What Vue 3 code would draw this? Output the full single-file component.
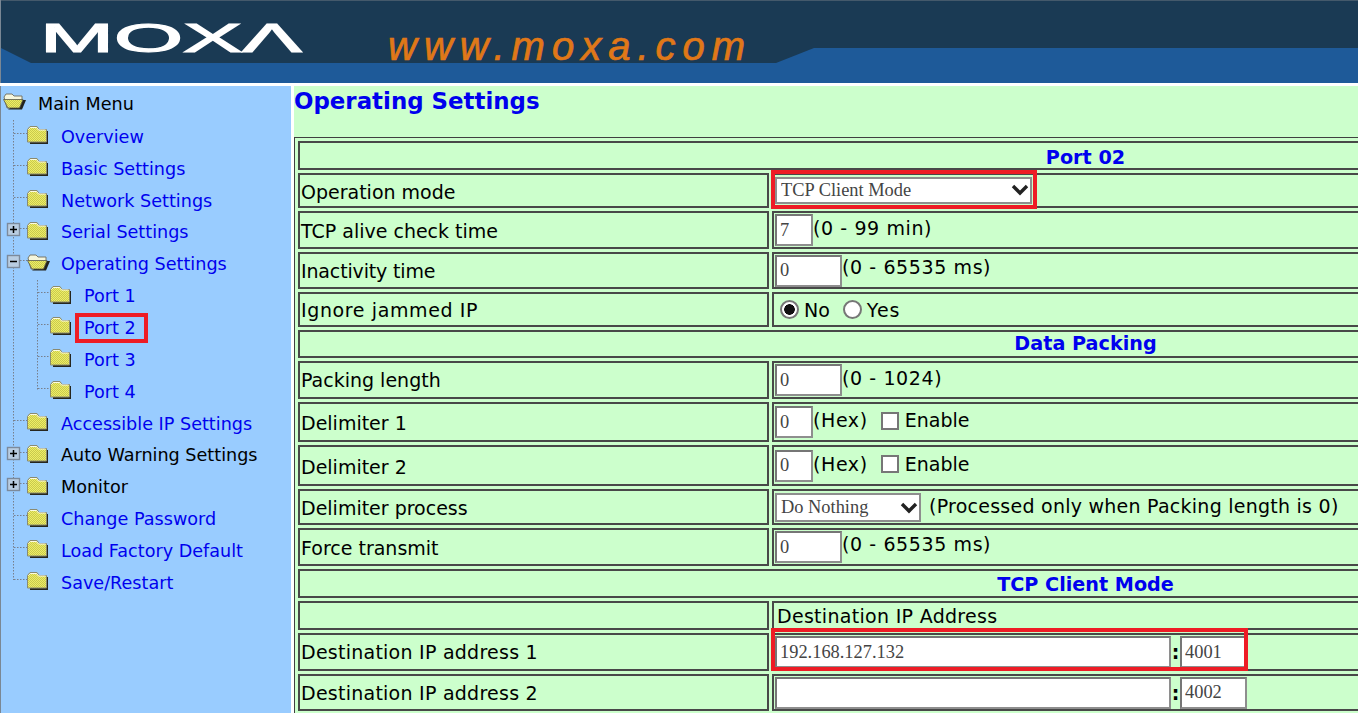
<script setup>
const menu = [
  { label: 'Main Menu', level: 0, open: true, dark: true },
  { label: 'Overview', level: 1 },
  { label: 'Basic Settings', level: 1 },
  { label: 'Network Settings', level: 1 },
  { label: 'Serial Settings', level: 1 },
  { label: 'Operating Settings', level: 1, open: true },
  { label: 'Port 1', level: 2 },
  { label: 'Port 2', level: 2, marked: true },
  { label: 'Port 3', level: 2 },
  { label: 'Port 4', level: 2 },
  { label: 'Accessible IP Settings', level: 1 },
  { label: 'Auto Warning Settings', level: 1, dark: true },
  { label: 'Monitor', level: 1, dark: true },
  { label: 'Change Password', level: 1 },
  { label: 'Load Factory Default', level: 1 },
  { label: 'Save/Restart', level: 1 },
]
const rowY = (i) => 104 + i * 31.87 - 86 - 1
const branches = menu
  .map((m, i) => ({ ...m, y: Math.round(rowY(i)) - 2 }))
  .filter((m) => m.level > 0)
const boxes = [4, 5, 11, 12].map((i) => ({ y: Math.round(rowY(i)), minus: i === 5 }))
</script>

<template>
  <div class="page">
    <header class="banner">
      <svg class="banner-shape" width="1358" height="83" viewBox="0 0 1358 83" aria-hidden="true">
        <polygon points="0,48 30,63 775,63 813,48 1358,48 1358,0 0,0" fill="#1a3a54" />
        <rect width="1358" height="1" fill="#44596b" />
      </svg>
      <span class="logo" aria-label="MOXA">MOXΛ</span>
      <span class="site">www.moxa.com</span>
    </header>
    <div class="gap"></div>
    <div class="main">
      <nav class="side">
        <svg class="tree" width="291" height="520" viewBox="0 0 291 520" aria-hidden="true">
          <defs>
            <pattern id="dither" width="2" height="2" patternUnits="userSpaceOnUse">
              <rect width="2" height="2" fill="#eeee66" />
              <rect width="1" height="1" fill="#c9c94e" />
              <rect x="1" y="1" width="1" height="1" fill="#c9c94e" />
            </pattern>
          </defs>
          <g stroke="#777f8c" stroke-width="1" stroke-dasharray="1.5 1.5" fill="none">
            <line x1="13.5" y1="34" x2="13.5" y2="494" />
            <line x1="37.5" y1="194" x2="37.5" y2="304" />
            <template v-for="b in branches" :key="b.label">
              <line v-if="b.level === 1" x1="14" :y1="b.y + 0.5" x2="27" :y2="b.y + 0.5" />
              <line v-else x1="38" :y1="b.y + 0.5" x2="50" :y2="b.y + 0.5" />
            </template>
          </g>
          <g v-for="b in boxes" :key="b.y">
            <rect x="7.5" :y="b.y - 6.5" width="12" height="12" fill="#b9cde2" stroke="#7c8a9c" stroke-width="1.4" />
            <line x1="10" x2="17" :y1="b.y - 0.5" :y2="b.y - 0.5" stroke="#000" stroke-width="1.5" />
            <line v-if="!b.minus" x1="13.5" x2="13.5" :y1="b.y - 4" :y2="b.y + 3" stroke="#000" stroke-width="1.5" />
          </g>
        </svg>
        <div
          v-for="m in menu"
          :key="m.label"
          class="node"
          :class="['lv' + m.level, { dark: m.dark, isopen: m.open }]"
        >
          <svg v-if="m.open" class="folder" width="23" height="19" viewBox="0 0 23 19" aria-hidden="true">
            <path d="M1 5 L3 2 H9 L11 4 H19 V16 H4 Z" fill="#f6f6dc" stroke="#77776a" />
            <path d="M5 17.5 H19 L23 8 H20 Z" fill="#22221c" />
            <path d="M0.5 7.5 H20 L16.5 16 H5 Z" fill="url(#dither)" stroke="#55554a" stroke-width="0.8" />
          </svg>
          <svg v-else class="folder" width="21" height="19" viewBox="0 0 21 19" aria-hidden="true">
            <path d="M3 6 H21 V19 H3 Z" fill="#26261e" />
            <path d="M0.5 4.5 L3 1.5 H10 L12 4.5 H19.5 V17 H0.5 Z" fill="url(#dither)" stroke="#8a8a70" stroke-width="1" />
            <path d="M1.5 4.5 L3.5 2.5 H9.5 L11.5 5 H18.5" fill="none" stroke="#fbfbe6" stroke-width="1" />
          </svg>
          <span class="node-label" :class="{ marked: m.marked }">{{ m.label }}</span>
        </div>
      </nav>
      <div class="strip"></div>
      <section class="content">
        <h1>Operating Settings</h1>
        <table class="form">
          <colgroup><col class="c1" /><col /></colgroup>
          <tbody>
            <tr class="r1"><th colspan="2">Port 02</th></tr>
            <tr class="r2">
              <td class="lab">Operation mode</td>
              <td class="val">
                <div class="line">
                  <select class="sel wide"><option>TCP Client Mode</option></select>
                </div>
                <i class="mark m-op"></i>
              </td>
            </tr>
            <tr class="r3">
              <td class="lab">TCP alive check time</td>
              <td class="val"><div class="line"><input class="txt w38 hi" value="7" /><span class="rng">(0 - 99 min)</span></div></td>
            </tr>
            <tr class="r4">
              <td class="lab tight">Inactivity time</td>
              <td class="val"><div class="line"><input class="txt w67 hi" value="0" /><span class="rng">(0 - 65535 ms)</span></div></td>
            </tr>
            <tr class="r5">
              <td class="lab loose">Ignore jammed IP</td>
              <td class="val">
                <div class="line choices">
                  <input type="radio" name="jam" class="rad" checked /><span class="opt">No</span>
                  <input type="radio" name="jam" class="rad second" /><span class="opt yes">Yes</span>
                </div>
              </td>
            </tr>
            <tr class="r6"><th colspan="2">Data Packing</th></tr>
            <tr class="r7">
              <td class="lab">Packing length</td>
              <td class="val"><div class="line"><input class="txt w67 hi" value="0" /><span class="rng">(0 - 1024)</span></div></td>
            </tr>
            <tr class="r8">
              <td class="lab">Delimiter 1</td>
              <td class="val"><div class="line"><input class="txt w38 hi" value="0" /><span class="rng">(Hex)</span><input type="checkbox" class="chk" /><span class="rng0">Enable</span></div></td>
            </tr>
            <tr class="r9">
              <td class="lab">Delimiter 2</td>
              <td class="val"><div class="line"><input class="txt w38 hi" value="0" /><span class="rng">(Hex)</span><input type="checkbox" class="chk" /><span class="rng0">Enable</span></div></td>
            </tr>
            <tr class="r10">
              <td class="lab">Delimiter process</td>
              <td class="val"><div class="line"><select class="sel narrow"><option>Do Nothing</option></select><span class="note">(Processed only when Packing length is 0)</span></div></td>
            </tr>
            <tr class="r11">
              <td class="lab">Force transmit</td>
              <td class="val"><div class="line"><input class="txt w67 hi" value="0" /><span class="rng">(0 - 65535 ms)</span></div></td>
            </tr>
            <tr class="r12"><th colspan="2">TCP Client Mode</th></tr>
            <tr class="r13">
              <td class="lab"></td>
              <td class="val"><div class="line head">Destination IP Address</div></td>
            </tr>
            <tr class="r14">
              <td class="lab semi">Destination IP address 1</td>
              <td class="val">
                <div class="line"><input class="txt ip hi" value="192.168.127.132" /><b class="colon">:</b><input class="txt port hi" value="4001" /></div>
                <i class="mark m-ip"></i>
              </td>
            </tr>
            <tr class="r15">
              <td class="lab semi">Destination IP address 2</td>
              <td class="val"><div class="line"><input class="txt ip hi" value="" /><b class="colon">:</b><input class="txt port hi" value="4002" /></div></td>
            </tr>
          </tbody>
        </table>
      </section>
    </div>
  </div>
</template>

<style>
html, body { margin: 0; background: #fff; overflow: hidden; }
</style>

<style scoped>
.page {
  width: 1358px;
  height: 713px;
  overflow: hidden;
  font-family: "DejaVu Sans", Verdana, sans-serif;
  font-size: 19px;
  color: #000;
  background: #fff;
}
.banner {
  position: relative;
  height: 83px;
  background: #1e5a99;
  border-left: 1px solid #7a8794;
  box-sizing: border-box;
  overflow: hidden;
}
.banner-shape { position: absolute; left: 0; top: 0; }
.logo {
  position: absolute;
  left: 39px;
  top: 16px;
  font-family: "Liberation Sans", sans-serif;
  font-weight: 400;
  font-size: 40px;
  line-height: 45px;
  color: #fff;
  -webkit-text-stroke: 1.2px #fff;
  transform: scaleX(2.22);
  transform-origin: left center;
}
.site {
  position: absolute;
  left: 387px;
  top: 23px;
  font-family: "Liberation Sans", sans-serif;
  font-style: italic;
  font-weight: 400;
  font-size: 40px;
  line-height: 46px;
  letter-spacing: 7px;
  color: #e07818;
  -webkit-text-stroke: 0.7px #e07818;
}
.gap { height: 3px; }
.main { display: flex; height: 627px; }
.side {
  position: relative;
  width: 291px;
  flex: none;
  box-sizing: border-box;
  padding-top: 2px;
  background: #99ccff;
  border-left: 1px solid #7a8794;
}
.tree { position: absolute; left: -1px; top: 0; }
.node {
  position: relative;
  display: flex;
  align-items: center;
  height: 31.87px;
  color: #0000ee;
  font-size: 17.6px;
  white-space: nowrap;
}
.node.dark { color: #000; }
.lv0 { padding-left: 2px; margin-bottom: 1px; }
.lv1 { padding-left: 26px; }
.lv2 { padding-left: 49px; }
.folder { flex: none; margin-top: -4px; }
.node-label { margin-left: 13px; }
.lv0 .node-label { margin-left: 12px; }
.lv1.isopen .node-label { margin-left: 11px; }
.marked { position: relative; }
.marked::after {
  content: "";
  position: absolute;
  left: -9px;
  right: -12px;
  top: -5px;
  bottom: -5px;
  border: 4px solid #ee1c25;
}
.strip { width: 3px; flex: none; }
.content {
  flex: none;
  width: 1064px;
  background: #ccffcc;
  overflow: hidden;
  position: relative;
}
h1 {
  margin: 0;
  height: 51px;
  font-size: 22.9px;
  line-height: 31px;
  font-weight: 700;
  color: #0000ee;
  white-space: nowrap;
}
.form {
  width: 1583px;
  table-layout: fixed;
  border-collapse: separate;
  border-spacing: 3px;
  border: 1px solid #404040;
}
.c1 { width: 471px; }
.form td, .form th {
  box-sizing: border-box;
  padding: 0;
  border: 2px solid #484848;
  line-height: 20px;
}
.form th {
  font-size: 19.2px;
  font-weight: 700;
  color: #0000ee;
  text-align: center;
}
.form .r1 th { padding-top: 5px; }
.form .r12 th { padding-top: 2px; }
.lab { padding-left: 1px !important; white-space: nowrap; }
.form .r2 .lab, .form .r3 .lab, .form .r8 .lab, .form .r9 .lab, .form .r10 .lab, .form .r11 .lab { padding-top: 2px; }
.loose { letter-spacing: 0.62px; }
.tight { letter-spacing: -0.15px; }
.semi { letter-spacing: 0.25px; }
.val { position: relative; padding-left: 1px !important; }
.r1 > * { height: 29px; }
.r2 > * { height: 35px; }
.r3 > * { height: 38px; }
.r4 > * { height: 37px; }
.r5 > * { height: 35px; }
.r6 > * { height: 28px; }
.r7 > * { height: 38px; }
.r8 > * { height: 40px; }
.r9 > * { height: 41px; }
.r10 > * { height: 36px; }
.r11 > * { height: 38px; }
.r12 > * { height: 29px; }
.r13 > * { height: 29px; }
.r14 > * { height: 38px; }
.r15 > * { height: 37px; }
.line { display: flex; align-items: center; white-space: nowrap; }
.line.head { padding-left: 2px; letter-spacing: 0.3px; }
.rng { letter-spacing: 0.6px; margin-bottom: 4px; }
.r4 .rng { margin-bottom: 7px; }
.r11 .rng { margin-bottom: 6px; }
.rng0 { margin-bottom: 4px; }
.txt, .sel {
  box-sizing: border-box;
  margin: 0;
  border: 2px solid;
  border-color: #767676 #8e8e8e #8e8e8e #767676;
  border-radius: 0;
  background-color: #fff;
  font-family: "Liberation Serif", serif;
  font-size: 18.4px;
  color: #444;
  outline: none;
}
.txt { padding: 0 3px; }
.hi { height: 32px; }
.w38 { width: 38px; }
.w67 { width: 67px; }
.ip { width: 396px; }
.port { width: 67px; }
.colon { width: 9px; text-align: center; }
.sel {
  appearance: none;
  height: 27px;
  padding: 0 4px 2px;
  border-color: #8e8e8e;
  background-repeat: no-repeat;
  background-image: url("data:image/svg+xml,%3Csvg xmlns='http://www.w3.org/2000/svg' width='18' height='12'%3E%3Cpath d='M2 2 L9 9 L16 2' fill='none' stroke='%23222' stroke-width='3.4'/%3E%3C/svg%3E");
}
.wide { width: 257px; background-position: 234px 5px; }
.narrow { width: 146px; height: 29px; padding-bottom: 0; background-position: 123px 7px; }
.note { margin-left: 8px; margin-bottom: 3px; letter-spacing: 0.25px; }
.chk {
  appearance: none;
  box-sizing: border-box;
  width: 18px;
  height: 18px;
  margin: 0 6px 3px 13px;
  background: #fff;
  border: 2px solid #767676;
}
.choices { padding-left: 5px; }
.rad {
  appearance: none;
  box-sizing: border-box;
  width: 19px;
  height: 19px;
  margin: 0 5px 0 0;
  border: 2px solid #767676;
  border-radius: 50%;
  background: #fff;
}
.rad:checked { background: radial-gradient(circle, #111 0 5px, #fff 5.6px); }
.rad.second { margin-left: 13px; margin-right: 5px; }
.yes { letter-spacing: 1px; }
.mark {
  position: absolute;
  box-sizing: border-box;
  border: 4px solid #ee1c25;
  pointer-events: none;
}
.m-op { left: -3px; top: -5px; width: 266px; height: 39px; }
.m-ip { left: -3px; top: -7px; width: 477px; height: 43px; }
</style>
